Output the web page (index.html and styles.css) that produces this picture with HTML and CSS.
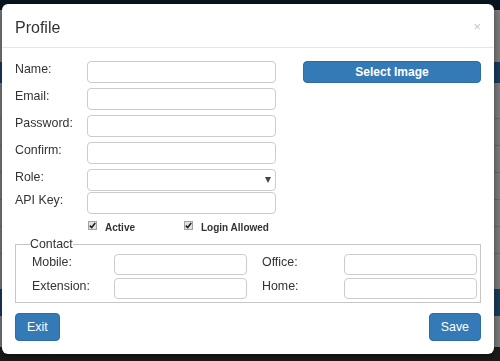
FILE: index.html
```html
<!DOCTYPE html>
<html>
<head>
  <meta charset="utf-8">
  <link rel="stylesheet" href="styles.css">
</head>
<body>

  <!-- page behind the dialog, dimmed by the backdrop -->
  <div class="page">
    <div class="page-nav"></div>
    <div class="page-main">
      <div class="page-bar"></div>
      <div class="page-rows">
        <div class="page-row"></div>
        <div class="page-row"></div>
        <div class="page-row"></div>
        <div class="page-row"></div>
        <div class="page-row"></div>
        <div class="page-row"></div>
      </div>
      <div class="page-bar page-bar-low"></div>
    </div>
    <div class="page-foot"></div>
  </div>

  <div class="modal">
    <div class="modal-header">
      <h4 class="modal-title">Profile</h4>
      <span class="close">&times;</span>
    </div>

    <div class="modal-body">
      <div class="top">
        <div class="fields">
          <div class="row">
            <label for="name">Name:</label>
            <input id="name" class="control" type="text" />
          </div>
          <div class="row">
            <label for="email">Email:</label>
            <input id="email" class="control" type="text" />
          </div>
          <div class="row">
            <label for="password">Password:</label>
            <input id="password" class="control" type="password" />
          </div>
          <div class="row">
            <label for="confirm">Confirm:</label>
            <input id="confirm" class="control" type="password" />
          </div>
          <div class="row row-tight">
            <label for="role">Role:</label>
            <span class="select-wrap">
              <select id="role" class="control"></select>
              <span class="caret"></span>
            </span>
          </div>
          <div class="row">
            <label for="apikey">API Key:</label>
            <input id="apikey" class="control" type="text" />
          </div>
        </div>
        <div class="side">
          <button type="button" class="btn btn-block">Select Image</button>
        </div>
      </div>

      <div class="checks">
        <span class="check">
          <span class="box"><svg width="7" height="7" viewBox="0 0 7 7"><path d="M0.8 3.6 L2.7 5.6 L6.2 1" fill="none" stroke="#222" stroke-width="1.6"/></svg></span>
          Active
        </span>
        <span class="check">
          <span class="box"><svg width="7" height="7" viewBox="0 0 7 7"><path d="M0.8 3.6 L2.7 5.6 L6.2 1" fill="none" stroke="#222" stroke-width="1.6"/></svg></span>
          Login Allowed
        </span>
      </div>

      <fieldset class="contact">
        <legend>Contact</legend>
        <div class="contact-grid">
          <label for="mobile">Mobile:</label>
          <input id="mobile" class="control control-sm" type="text" />
          <label for="office" class="second">Office:</label>
          <input id="office" class="control control-sm" type="text" />
          <label for="extension">Extension:</label>
          <input id="extension" class="control control-sm" type="text" />
          <label for="home" class="second">Home:</label>
          <input id="home" class="control control-sm" type="text" />
        </div>
      </fieldset>
    </div>

    <div class="modal-footer">
      <button type="button" class="btn">Exit</button>
      <button type="button" class="btn">Save</button>
    </div>
  </div>

</body>
</html>
```

FILE: styles.css
```css
* {
  box-sizing: border-box;
}

html,
body {
  margin: 0;
  height: 100%;
}

body {
  font-family: "Liberation Sans", Arial, sans-serif;
  font-size: 12.4px;
  color: #333;
  background: #1b1b1b;
  overflow: hidden;
}

/* Page under the backdrop, only its edges show */
.page {
  display: flex;
  flex-direction: column;
  height: 100%;
}

.page-nav {
  height: 10px;
  background: #0a141c;
}

.page-main {
  flex: 1;
  background: #7e7e7e;
  padding-top: 52px;
}

.page-bar {
  height: 21px;
  background: #1b3d5c;
}

.page-rows {
  margin-top: 9px;
}

.page-row {
  height: 27px;
  border-bottom: 1px solid #6b6b6b;
}

.page-bar-low {
  margin-top: 35px;
  height: 27px;
}

.page-foot {
  height: 14px;
  background: #1b1b1b;
}

/* Dialog */
.modal {
  position: fixed;
  left: 2px;
  top: 4px;
  width: 492px;
  background: #fff;
  border-radius: 6px;
  box-shadow: 0 3px 9px rgba(0, 0, 0, 0.5);
}

.modal-header {
  display: flex;
  height: 44px;
  padding: 14px 13px 0;
  border-bottom: 1px solid #e5e5e5;
}

.modal-title {
  margin: 0;
  font-size: 16px;
  font-weight: normal;
  line-height: 20px;
}

.close {
  margin-left: auto;
  margin-top: -1px;
  font-size: 13px;
  line-height: 20px;
  color: #c4c4c4;
}

.modal-body {
  padding: 13px 13px 0;
}

.top {
  display: flex;
}

.fields {
  width: 261px;
}

.side {
  width: 178px;
  margin-left: 27px;
}

.row {
  display: flex;
  align-items: flex-start;
  margin-bottom: 5px;
}

.row-tight {
  margin-bottom: 1px;
}

.row label {
  width: 72px;
  line-height: 16px;
}

.control {
  width: 189px;
  height: 22px;
  margin: 0;
  padding: 0 6px;
  border: 1px solid #ccc;
  border-radius: 4px;
  background: #fff;
  font: inherit;
  color: #333;
}

select.control {
  appearance: none;
  -webkit-appearance: none;
}

.select-wrap {
  position: relative;
  display: block;
  height: 22px;
}

.caret {
  position: absolute;
  right: 5px;
  top: 8px;
  border-left: 3.5px solid transparent;
  border-right: 3.5px solid transparent;
  border-top: 6px solid #444;
}

.btn {
  height: 28px;
  margin: 0;
  padding: 0 11px;
  border: 1px solid #2e6da4;
  border-radius: 4px;
  background: #337ab7;
  color: #fff;
  font: inherit;
}

.btn-block {
  width: 178px;
  height: 22px;
  font-size: 12px;
  font-weight: bold;
}

/* Checkboxes under the fields */
.checks {
  display: flex;
  margin-top: 3px;
  padding-left: 73px;
  font-size: 10px;
  font-weight: bold;
  line-height: 12px;
}

.check {
  display: flex;
  align-items: flex-start;
  gap: 8px;
  width: 96px;
}

.check + .check {
  width: auto;
}

.box {
  display: flex;
  align-items: center;
  justify-content: center;
  width: 9px;
  height: 9px;
  margin-top: -1px;
  border: 1px solid #a2a2a2;
  background: #e2e2e2;
}

/* Contact fieldset */
.contact {
  margin: 2px 0 0;
  min-width: 0;
  padding: 2px 3px 3px 16px;
  border: 1px solid #c6c6c6;
}

.contact legend {
  margin-left: -2px;
  padding: 0;
  line-height: 16px;
}

.contact-grid {
  display: grid;
  grid-template-columns: 82px 133px 97px 133px;
  grid-auto-rows: 21px;
  row-gap: 3px;
}

.contact-grid label {
  line-height: 16px;
}

.contact-grid .second {
  padding-left: 15px;
}

.control-sm {
  width: 133px;
  height: 21px;
}

.modal-footer {
  display: flex;
  justify-content: space-between;
  padding: 10px 13px 13px;
}
```
